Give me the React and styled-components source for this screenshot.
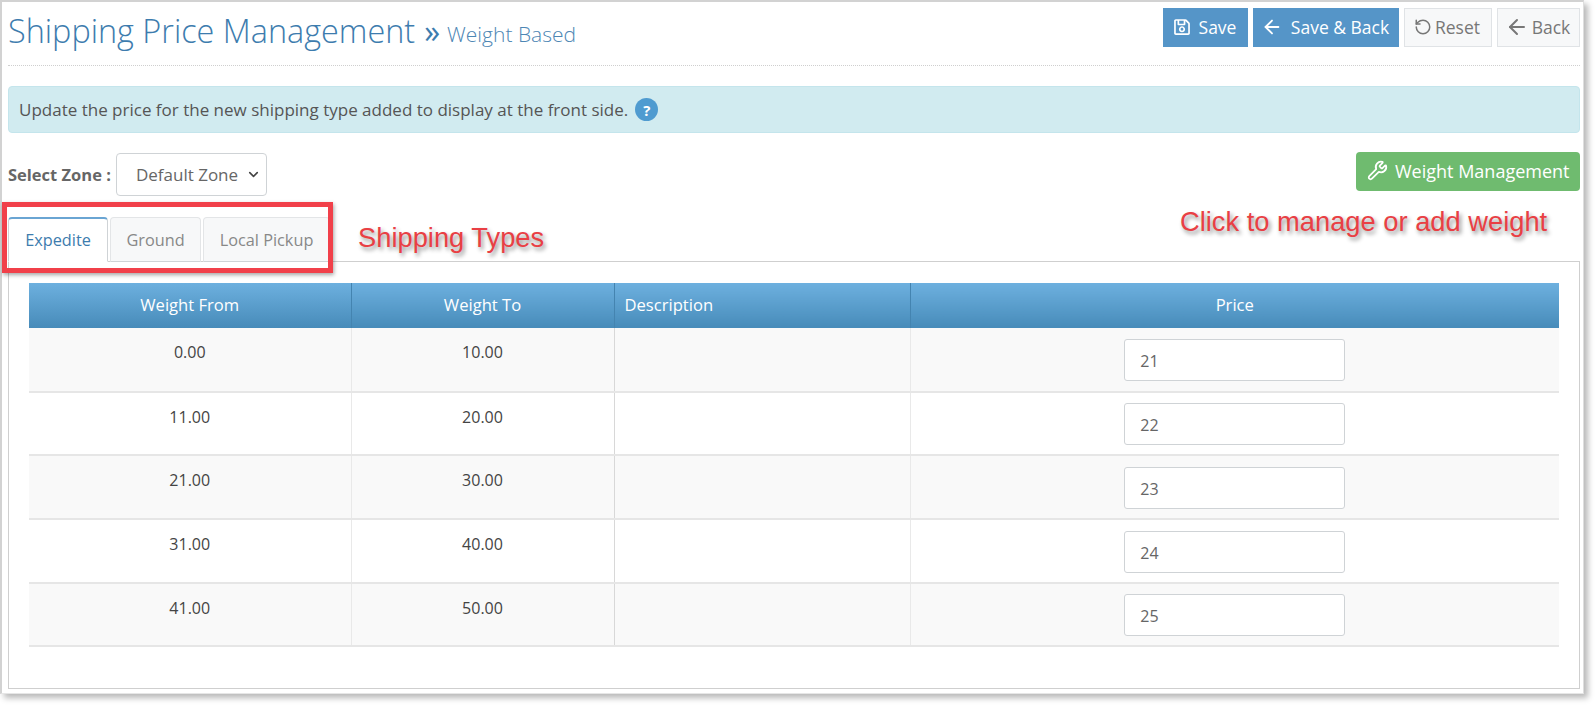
import React from "react";
import styled, { createGlobalStyle } from "styled-components";
import { ArrowLeft, RotateCcw, Wrench, ChevronDown } from "lucide-react";
import { FaRegSave } from "react-icons/fa";

const Global = createGlobalStyle`
  html, body { margin: 0; padding: 0; background: #fff; min-height: 706px; }
  body { font-family: "Open Sans", sans-serif; color: #555; }
  * { box-sizing: border-box; }
`;

const Frame = styled.div`
  position: relative;
  width: 1584px;
  height: 694px;
  padding: 6px 3px 0 6px;
  background: #fff;
  border-top: 2px solid #d2d2d2;
  border-left: 2px solid #d2d2d2;
  border-right: 1px solid #dedede;
  border-bottom: 1px solid #e6e6e6;
  box-shadow: 4px 4px 6px rgba(0, 0, 0, 0.28);
`;

const Header = styled.header`
  display: flex;
  justify-content: space-between;
  align-items: flex-start;
  height: 58px;
  border-bottom: 1px dotted #cfcfcf;
`;

const Title = styled.h1`
  margin: 0;
  display: flex;
  align-items: baseline;
  font-weight: 300;
  font-size: 32.4px;
  line-height: 44px;
  color: #3d7cae;
  white-space: nowrap;
`;

const Arrows = styled.span`
  margin: 0 7px 0 9px;
  font-weight: 400;
  font-size: 32px;
  color: #3d7cae;
`;

const Sub = styled.small`
  font-size: 21px;
  font-weight: 300;
  color: #4d86b4;
  position: relative;
  top: -1px;
`;

const Actions = styled.div`
  display: flex;
  gap: 5px;
`;

const ActionButton = styled.button`
  display: inline-flex;
  align-items: center;
  justify-content: center;
  gap: ${(p) => (p.$ghost ? "3px" : "8px")};
  width: ${(p) => p.$w}px;
  height: 39px;
  padding: 0 2px 2px 0;
  font: 400 17.5px "Open Sans", sans-serif;
  color: ${(p) => (p.$ghost ? "#777" : "#fff")};
  background: ${(p) => (p.$ghost ? "#f7f8f9" : "#5595c8")};
  border: 1px solid ${(p) => (p.$ghost ? "#e0e3e6" : "#5595c8")};
`;

const Alert = styled.div`
  display: flex;
  align-items: center;
  gap: 7px;
  height: 47px;
  margin-top: 20px;
  padding: 0 10px;
  font-size: 17px;
  color: #555;
  background: #d1ebf0;
  border: 1px solid #c4e5ec;
  border-radius: 4px;
`;

const Help = styled.span`
  display: inline-flex;
  align-items: center;
  justify-content: center;
  width: 23px;
  height: 23px;
  border-radius: 50%;
  background: #4f9bd0;
  color: #fff;
  font-size: 15px;
  font-weight: 700;
`;

const ZoneRow = styled.div`
  display: flex;
  justify-content: space-between;
  align-items: flex-start;
  margin-top: 20px;
`;

const ZoneGroup = styled.div`
  display: flex;
  align-items: center;
  gap: 5px;
`;

const ZoneLabel = styled.label`
  font-size: 16.5px;
  font-weight: 700;
  color: #666;
`;

const ZoneSelect = styled.div`
  display: flex;
  align-items: center;
  justify-content: space-between;
  width: 151px;
  height: 43px;
  padding: 0 5px 0 19px;
  font-size: 17px;
  color: #666;
  background: #fff;
  border: 1px solid #cfd3d6;
  border-radius: 4px;
`;

const GreenButton = styled.button`
  display: inline-flex;
  align-items: center;
  gap: 7px;
  width: 224px;
  height: 39px;
  margin-top: -1px;
  padding: 0 0 2px 11px;
  font: 400 18px "Open Sans", sans-serif;
  color: #fff;
  background: #6fbb6f;
  border: none;
  border-radius: 4px;
  white-space: nowrap;
`;

const TabBar = styled.div`
  display: flex;
  gap: 2px;
  height: 45px;
  margin-top: 21px;
  position: relative;
  z-index: 1;
`;

const Tab = styled.div`
  display: flex;
  align-items: center;
  justify-content: center;
  width: ${(p) => p.$w}px;
  font-size: 16.3px;
  color: ${(p) => (p.$active ? "#3d7cae" : "#888")};
  background: ${(p) => (p.$active ? "#fff" : "#f7f8f9")};
  border: 1px solid ${(p) => (p.$active ? "#cfd3d6" : "#e3e5e7")};
  border-top: ${(p) => (p.$active ? "2px solid #6aa5d3" : "1px solid #e3e5e7")};
  border-bottom: ${(p) => (p.$active ? "1px solid #fff" : "1px solid #cfd3d6")};
  border-radius: 4px 4px 0 0;
`;

const Panel = styled.div`
  height: 428px;
  margin-top: -1px;
  padding: 21px 20px 0 20px;
  border: 1px solid #cfcfcf;
`;

const Table = styled.table`
  width: 1530px;
  border-collapse: collapse;
  table-layout: fixed;
  font-size: 16px;
`;

const HeadCell = styled.th`
  height: 45px;
  padding: 0 10px 2px;
  font-weight: 400;
  font-size: 16.6px;
  color: #fff;
  text-align: ${(p) => (p.$left ? "left" : "center")};
  background: linear-gradient(to bottom, #6db0df, #478bb9);
  border-left: 1px solid #4484b0;
  &:first-child { border-left: none; }
`;

const Row = styled.tr`
  height: 63.7px;
  background: ${(p) => (p.$odd ? "#f9f9f9" : "#fff")};
  border-bottom: 2px solid #e6e6e6;
`;

const Cell = styled.td`
  padding: 12px 10px 0;
  vertical-align: top;
  text-align: center;
  color: #444;
  line-height: 25px;
  border-left: 1px solid ${(p) => (p.$strong ? "#d8d8d8" : "#e9e9e9")};
  &:first-child { border-left: none; }
`;

const PriceBox = styled.input`
  display: block;
  width: 221px;
  height: 42px;
  margin: 0 auto;
  padding: 2px 15px 0;
  font: 400 16px "Open Sans", sans-serif;
  color: #666;
  background: #fff;
  border: 1px solid #cfd3d6;
  border-radius: 3px;
`;

const PriceCell = styled(Cell)`
  padding: 10.5px 0 0;
`;

const Callout = styled.div`
  position: absolute;
  left: 0;
  top: 200px;
  width: 331px;
  height: 71px;
  border: 5px solid #f1404a;
  box-shadow: 1px 2px 4px rgba(0, 0, 0, 0.35);
  z-index: 2;
`;

const Note = styled.span`
  position: absolute;
  left: ${(p) => p.$x}px;
  top: ${(p) => p.$y}px;
  font: 400 27.3px "Liberation Sans", Arial, sans-serif;
  color: #e93f44;
  text-shadow: 2px 3px 4px rgba(0, 0, 0, 0.45);
  white-space: nowrap;
  z-index: 2;
`;

const rows = [
  ["0.00", "10.00", "21"],
  ["11.00", "20.00", "22"],
  ["21.00", "30.00", "23"],
  ["31.00", "40.00", "24"],
  ["41.00", "50.00", "25"],
];

export default function App() {
  return (
    <>
      <Global />
      <Frame>
        <Header>
          <Title>
            Shipping Price Management
            <Arrows>»</Arrows>
            <Sub>Weight Based</Sub>
          </Title>
          <Actions>
            <ActionButton $w={85}>
              <FaRegSave size={18} />
              Save
            </ActionButton>
            <ActionButton $w={146}>
              <ArrowLeft size={22} />
              Save &amp; Back
            </ActionButton>
            <ActionButton $w={88} $ghost>
              <RotateCcw size={18} />
              Reset
            </ActionButton>
            <ActionButton $w={83} $ghost>
              <ArrowLeft size={24} />
              Back
            </ActionButton>
          </Actions>
        </Header>
        <Alert>
          Update the price for the new shipping type added to display at the front side.
          <Help>?</Help>
        </Alert>
        <ZoneRow>
          <ZoneGroup>
            <ZoneLabel>Select Zone :</ZoneLabel>
            <ZoneSelect>
              Default Zone
              <ChevronDown size={15} strokeWidth={2.5} color="#444" />
            </ZoneSelect>
          </ZoneGroup>
          <GreenButton>
            <Wrench size={21} />
            Weight Management
          </GreenButton>
        </ZoneRow>
        <TabBar>
          <Tab $w={100} $active>Expedite</Tab>
          <Tab $w={91}>Ground</Tab>
          <Tab $w={127}>Local Pickup</Tab>
        </TabBar>
        <Panel>
          <Table>
            <colgroup>
              <col style={{ width: 322 }} />
              <col style={{ width: 263 }} />
              <col style={{ width: 296 }} />
              <col style={{ width: 649 }} />
            </colgroup>
            <thead>
              <tr>
                <HeadCell>Weight From</HeadCell>
                <HeadCell>Weight To</HeadCell>
                <HeadCell $left>Description</HeadCell>
                <HeadCell>Price</HeadCell>
              </tr>
            </thead>
            <tbody>
              {rows.map((r, i) => (
                <Row key={r[2]} $odd={i % 2 === 0}>
                  <Cell>{r[0]}</Cell>
                  <Cell>{r[1]}</Cell>
                  <Cell $strong />
                  <PriceCell>
                    <PriceBox defaultValue={r[2]} />
                  </PriceCell>
                </Row>
              ))}
            </tbody>
          </Table>
        </Panel>
        <Callout />
        <Note $x={356} $y={220}>Shipping Types</Note>
        <Note $x={1178} $y={204}>Click to manage or add weight</Note>
      </Frame>
    </>
  );
}
